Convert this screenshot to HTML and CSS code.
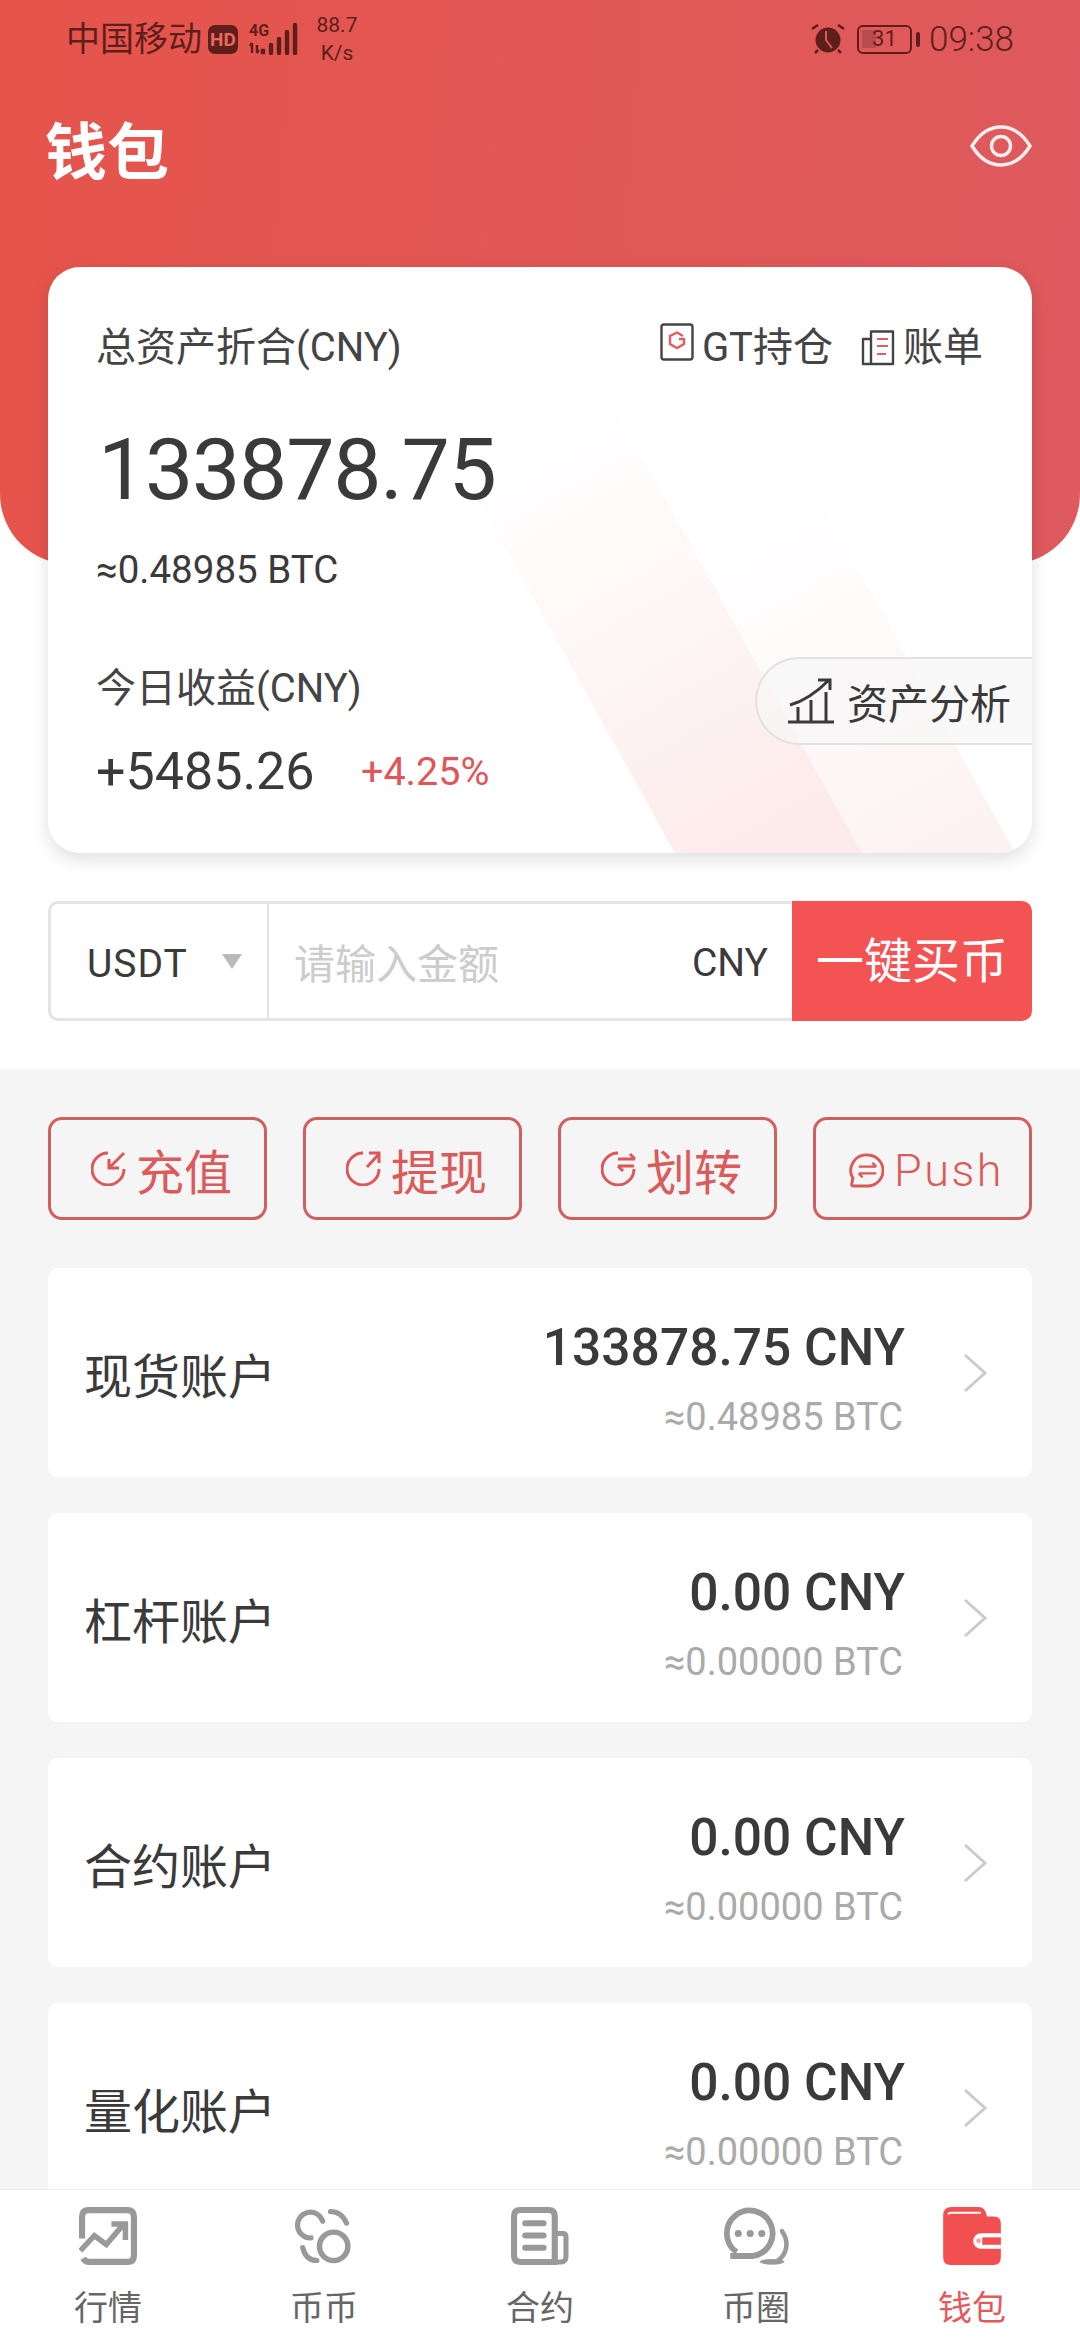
FILE: index.html
```html
<!DOCTYPE html>
<html>
<head>
<title>钱包</title>
<link rel="stylesheet" href="styles.css">
</head>
<body>
<div class="screen">
  <div class="main">
    <div class="head">
      <div class="status">
        <div class="status-left">
          <span class="carrier">中国移动</span>
          <span class="hd">HD</span>
          <svg class="signal" width="50" height="36" viewBox="0 -4 50 36">
            <text x="0" y="13" class="net">4G</text>
            <path d="M3 20v10M1 23l2-3M8 22v8M8 30l2-3M13 27h2v3h-2z" stroke="#5e1f1b" stroke-width="2.4" fill="none"/>
            <path d="M22 22v8M30 16v14M38 9v21M46 2v28" stroke="#5e1f1b" stroke-width="4.4" stroke-linecap="round"/>
          </svg>
          <span class="speed">88.7<br>K/s</span>
        </div>
        <div class="status-right">
          <svg width="34" height="30" viewBox="0 0 34 30">
            <circle cx="17" cy="16" r="12.5" fill="#5e1f1b"/>
            <path d="M1 5l6-4M33 5l-6-4M7 26l-3 3M27 26l3 3" stroke="#5e1f1b" stroke-width="2.6" fill="none"/>
            <path d="M15 7v9l6 8" stroke="#dc5a58" stroke-width="2" fill="none"/>
          </svg>
          <div class="battery"><span class="battery-fill"></span><span class="battery-num">31</span></div>
          <span class="battery-cap"></span>
          <span class="clock">09:38</span>
        </div>
      </div>
      <div class="title-row">
        <h1 class="title">钱包</h1>
        <svg class="eye" width="62" height="44" viewBox="0 0 62 44" fill="none" stroke="#fbeeee">
          <path d="M2 22C10 9 19 3 31 3s21 6 29 19C52 35 43 41 31 41S10 35 2 22Z" stroke-width="3.4"/>
          <circle cx="31" cy="22" r="9.5" stroke-width="3.4"/>
        </svg>
      </div>
    </div>

    <div class="card">
      <svg class="card-stripes" width="984" height="586" viewBox="0 0 984 586">
        <defs>
          <linearGradient id="stripeA" gradientUnits="userSpaceOnUse" x1="720" y1="586" x2="460" y2="120">
            <stop offset="0" stop-color="#fdeaea"/>
            <stop offset="0.55" stop-color="#fef8f8"/>
            <stop offset="0.85" stop-color="#fffefe"/>
            <stop offset="1" stop-color="#ffffff"/>
          </linearGradient>
          <linearGradient id="stripeB" gradientUnits="userSpaceOnUse" x1="890" y1="586" x2="680" y2="200">
            <stop offset="0" stop-color="#fdf2f2"/>
            <stop offset="0.7" stop-color="#fffdfd"/>
            <stop offset="1" stop-color="#ffffff"/>
          </linearGradient>
        </defs>
        <polygon points="814,586 967,586 754,200 601,200" fill="url(#stripeB)"/>
        <polygon points="627,586 814,586 555,120 368,120" fill="url(#stripeA)"/>
      </svg>

      <div class="card-top">
        <span>总资产折合(CNY)</span>
        <div class="card-links">
          <span class="card-link">
            <svg class="gt-icon" width="34" height="38" viewBox="0 0 34 38" fill="none">
              <rect x="1.5" y="1.5" width="31" height="35" rx="2.5" stroke="#444" stroke-width="2.4"/>
              <path d="M23 13l-6-3.5L10 13v8l7 4 7-4v-5h-5" stroke="#dd5f5f" stroke-width="2.4"/>
            </svg>
            GT持仓
          </span>
          <span class="card-link">
            <svg width="34" height="36" viewBox="0 0 34 36" fill="none">
              <path d="M10 9H2v25h30V1.500H10V34" stroke="#444" stroke-width="2.4" stroke-linejoin="round"/>
              <path d="M16 9h11M16 16h11M16 24h9" stroke="#dd5f5f" stroke-width="2.2"/>
            </svg>
            账单
          </span>
        </div>
      </div>
      <div class="total">133878.75</div>
      <div class="total-btc">≈0.48985 BTC</div>
      <div class="today-label">今日收益(CNY)</div>
      <div class="today-row">
        <span class="today-val">+5485.26</span>
        <span class="today-pct">+4.25%</span>
      </div>

      <div class="analysis">
        <svg width="48" height="46" viewBox="0 0 48 46" fill="none" stroke="#3a3a3a" stroke-width="3">
          <path d="M1 44h46M3 27C18 23 30 14 42 2M31 2h12v10M11 44V29M24 44V22M39 44V14"/>
        </svg>
        资产分析
      </div>
    </div>

    <div class="buy">
      <div class="buy-coin">USDT<span class="caret"></span></div>
      <div class="buy-input">
        <span class="placeholder">请输入金额</span>
        <span>CNY</span>
      </div>
      <div class="buy-btn">一键买币</div>
    </div>

    <div class="lower">
      <div class="actions">
        <div class="action">
          <svg class="action-icon" viewBox="0 0 35 35">
            <path d="M17 2A16 16 0 1 0 33 18M33 2 18 17M18 8v9h10"/>
          </svg>
          充值
        </div>
        <div class="action">
          <svg class="action-icon" viewBox="0 0 35 35">
            <path d="M17 2A16 16 0 1 0 33 18M21 16 33 3M23 2h10v10"/>
          </svg>
          提现
        </div>
        <div class="action">
          <svg class="action-icon" viewBox="0 0 35 35">
            <path d="M17 2A16 16 0 1 0 33 18M17 8h17M29 3l5 5M17 15h16M17 15l5 5"/>
          </svg>
          划转
        </div>
        <div class="action action-push">
          <svg class="action-icon" viewBox="0 0 36 36">
            <path d="M19 2a16 16 0 0 1 0 32H5q-3 0-2-3l1-5A16 16 0 0 1 19 2Z"/>
            <path d="M10 14h18M24 10l4 4M10 21h18M10 21l4 4" stroke-width="2.4"/>
          </svg>
          Push
        </div>
      </div>

      <div class="account">
        <span class="acc-name">现货账户</span>
        <div class="acc-nums">
          <div class="acc-cny">133878.75 CNY</div>
          <div class="acc-btc">≈0.48985 BTC</div>
        </div>
        <svg class="chev" width="26" height="40" viewBox="0 0 26 40"><path d="M3 2l20 18L3 38"/></svg>
      </div>
      <div class="account">
        <span class="acc-name">杠杆账户</span>
        <div class="acc-nums">
          <div class="acc-cny">0.00 CNY</div>
          <div class="acc-btc">≈0.00000 BTC</div>
        </div>
        <svg class="chev" width="26" height="40" viewBox="0 0 26 40"><path d="M3 2l20 18L3 38"/></svg>
      </div>
      <div class="account">
        <span class="acc-name">合约账户</span>
        <div class="acc-nums">
          <div class="acc-cny">0.00 CNY</div>
          <div class="acc-btc">≈0.00000 BTC</div>
        </div>
        <svg class="chev" width="26" height="40" viewBox="0 0 26 40"><path d="M3 2l20 18L3 38"/></svg>
      </div>
      <div class="account">
        <span class="acc-name">量化账户</span>
        <div class="acc-nums">
          <div class="acc-cny">0.00 CNY</div>
          <div class="acc-btc">≈0.00000 BTC</div>
        </div>
        <svg class="chev" width="26" height="40" viewBox="0 0 26 40"><path d="M3 2l20 18L3 38"/></svg>
      </div>
    </div>
  </div>

  <div class="tabs">
    <div class="tab">
      <svg class="tab-icon" viewBox="0 0 170 170" fill="none" stroke="#999">
        <path d="M9 92V28Q9 9 28 9H142Q161 9 161 28V142Q161 161 142 161H30Q18 161 12 150" stroke-width="18"/>
        <path d="M4 128 45 84 80 110 126 56" stroke-width="16"/>
        <path d="M95 50H136V97" stroke-width="16"/>
      </svg>
      行情
    </div>
    <div class="tab">
      <svg class="tab-icon" viewBox="0 0 180 172" fill="none" stroke="#999" stroke-width="16" stroke-linecap="round">
        <circle cx="120" cy="118" r="44" stroke-width="17"/>
        <path d="M86 40A40 40 0 1 0 50 92"/>
        <path d="M110 10C135 10 150 24 160 46"/>
        <path d="M24 122C30 148 45 162 68 162"/>
      </svg>
      币币
    </div>
    <div class="tab">
      <svg class="tab-icon" viewBox="0 0 57 57" fill="none" stroke="#999">
        <path d="M3 9Q3 3 9 3H37Q43 3 43 9V54H9Q3 54 3 48Z" stroke-width="6"/>
        <path d="M43 26H51Q54 26 54 29V49Q54 54 49 54H43" stroke-width="5"/>
        <path d="M14 16H32M14 28H32M14 40H32" stroke-width="6" stroke-linecap="round"/>
      </svg>
      合约
    </div>
    <div class="tab">
      <svg class="tab-icon tab-chat" viewBox="0 0 200 180" fill="none" stroke="#999">
        <path d="M40 140A71 71 0 1 1 90 152H20" stroke-width="18"/>
        <path d="M181 75C205 110 195 150 165 168" stroke-width="14" stroke-linecap="round"/>
        <ellipse cx="150" cy="170" rx="38" ry="9" fill="#999" stroke="none"/>
        <g fill="#999" stroke="none">
          <circle cx="45" cy="82" r="11"/>
          <circle cx="82" cy="82" r="11"/>
          <circle cx="118" cy="82" r="11"/>
        </g>
      </svg>
      币圈
    </div>
    <div class="tab tab-on">
      <svg class="tab-icon" viewBox="0 0 171 172">
        <path d="M0 25Q0 0 25 0H105Q125 0 130 28H150Q171 28 171 50V150Q171 172 150 172H22Q0 172 0 150Z" fill="#f25050"/>
        <path d="M16 22Q16 17 24 17H112" fill="none" stroke="#fff" stroke-width="6"/>
        <path d="M171 78H112A23 23 0 0 0 112 124H171Z" fill="#fff"/>
        <rect x="116" y="90" width="55" height="22" fill="#f25050"/>
        <circle cx="105" cy="100" r="7" fill="#f4a0a0"/>
      </svg>
      钱包
    </div>
  </div>
</div>
</body>
</html>
```

FILE: styles.css
```css
* {
    box-sizing: border-box;
}
body {
    margin: 0;
    background-color: #fff;
    font-family: Roboto, "Noto Sans CJK SC", sans-serif;
    color: #3a3a3a;
}
.screen {
    width: 1080px;
    height: 2340px;
    display: flex;
    flex-direction: column;
    overflow: hidden;
}
.main {
    flex: 1;
    min-height: 0;
    overflow: hidden;
}

/* red header */
.head {
    height: 564px;
    padding: 17px 48px 0 45px;
    background: linear-gradient(95deg, #e6544b, #de5a5e);
    border-radius: 0 0 70px 70px;
}
.status {
    display: flex;
    justify-content: space-between;
    align-items: flex-start;
    height: 60px;
    padding: 0 18px 0 21px;
    color: #5e1f1b;
}
.status-left,
.status-right {
    display: flex;
    align-items: center;
    height: 44px;
}
.status-left {
    gap: 6px;
}
.carrier {
    font-size: 34px;
    line-height: 44px;
}
.hd {
    width: 30px;
    height: 29px;
    border-radius: 7px;
    background-color: #5e1f1b;
    color: #e9675f;
    font-size: 19px;
    font-weight: 700;
    line-height: 29px;
    text-align: center;
}
.signal {
    margin: -4px 0 0 5px;
}
.net {
    font: 700 16px Roboto, sans-serif;
    fill: #5e1f1b;
}
.speed {
    margin-left: 9px;
    width: 46px;
    font-size: 21px;
    line-height: 28px;
    text-align: center;
}
.battery {
    position: relative;
    width: 55px;
    height: 29px;
    margin-left: 12px;
    border: 2.5px solid #5e1f1b;
    border-radius: 6px;
    overflow: hidden;
}
.battery-fill {
    position: absolute;
    left: 3px;
    top: 3px;
    width: 14px;
    height: 18px;
    background-color: #b84c4c;
}
.battery-num {
    position: relative;
    display: block;
    font-size: 22px;
    line-height: 24px;
    text-align: center;
}
.battery-cap {
    width: 4px;
    height: 15px;
    margin-left: 4px;
    border-radius: 2px;
    background-color: #5e1f1b;
}
.clock {
    margin-left: 9px;
    font-size: 35px;
    font-weight: 300;
}
.title-row {
    display: flex;
    justify-content: space-between;
    align-items: flex-start;
    height: 100px;
    margin-top: 27px;
}
.title {
    margin: 0;
    color: #fff;
    font-size: 62px;
    font-weight: 700;
    line-height: 100px;
}
.eye {
    margin-top: 20px;
}

/* asset card */
.card {
    position: relative;
    height: 586px;
    margin: -297px 48px 0;
    padding: 56px 48px 0;
    background-color: #fff;
    border-radius: 32px;
    box-shadow: 0 6px 18px rgba(0, 0, 0, 0.13);
    overflow: hidden;
}
.card-stripes {
    position: absolute;
    left: 0;
    top: 0;
}
.card-top,
.total,
.total-btc,
.today-label,
.today-row {
    position: relative;
}
.card-top {
    display: flex;
    justify-content: space-between;
    font-size: 40px;
    line-height: 50px;
    color: #444;
}
.card-links {
    display: flex;
    gap: 28px;
    margin-right: 1px;
}
.card-link {
    display: flex;
    align-items: center;
    gap: 8px;
}
.gt-icon {
    margin-top: -12px;
}
.total {
    margin-top: 47px;
    margin-left: 2px;
    font-size: 86px;
    line-height: 100px;
    letter-spacing: -1.3px;
}
.total-btc {
    margin-top: 25px;
    font-size: 38.5px;
    line-height: 50px;
}
.today-label {
    margin-top: 69px;
    font-size: 40px;
    line-height: 50px;
    color: #444;
}
.today-row {
    display: flex;
    align-items: center;
    margin-top: 28px;
    line-height: 60px;
}
.today-val {
    width: 265px;
    font-size: 52px;
}
.today-pct {
    color: #df5558;
    font-size: 39.5px;
}
.analysis {
    position: absolute;
    right: 0;
    top: 390px;
    display: flex;
    align-items: center;
    gap: 12px;
    width: 277px;
    height: 88px;
    padding-left: 30px;
    background-color: rgba(246, 246, 246, 0.7);
    border: 2px solid #e2e2e2;
    border-right: 0;
    border-radius: 44px 0 0 44px;
    font-size: 41px;
}

/* buy row */
.buy {
    display: flex;
    height: 120px;
    margin: 48px 48px 0;
    font-size: 39px;
}
.buy-coin {
    display: flex;
    align-items: center;
    width: 220px;
    padding: 6px 0 0 36px;
    border: 3px solid #e4e4e4;
    border-right-width: 1px;
    border-radius: 10px 0 0 10px;
    letter-spacing: 1px;
}
.caret {
    width: 0;
    height: 0;
    margin: -6px 0 0 34px;
    border-left: 10px solid transparent;
    border-right: 10px solid transparent;
    border-top: 15px solid #bbb;
}
.buy-input {
    flex: 1;
    display: flex;
    justify-content: space-between;
    align-items: center;
    padding: 4px 24px 0 25px;
    border-top: 3px solid #e4e4e4;
    border-bottom: 3px solid #e4e4e4;
    border-left: 1px solid #e4e4e4;
}
.placeholder {
    margin-top: -4px;
    color: #ccc;
    font-size: 41px;
}
.buy-btn {
    width: 240px;
    background-color: #f45353;
    border-radius: 0 10px 10px 0;
    color: #fff;
    font-size: 48px;
    line-height: 122px;
    text-align: center;
}

/* grey part */
.lower {
    height: 1200px;
    margin-top: 48px;
    padding: 48px 48px 0;
    background-color: #f5f5f5;
}
.actions {
    display: grid;
    grid-template-columns: repeat(4, 1fr);
    gap: 36px;
}
.action {
    display: flex;
    justify-content: center;
    align-items: center;
    gap: 10px;
    height: 103px;
    padding-left: 8px;
    border: 3px solid #d06060;
    border-radius: 14px;
    color: #da5b5b;
    font-size: 48px;
}
.action-push {
    padding-top: 4px;
    font-size: 45px;
    font-weight: 300;
    letter-spacing: 2.5px;
}
.action-icon {
    width: 35px;
    height: 35px;
    fill: none;
    stroke: #dc5757;
    stroke-width: 3;
}
.account {
    display: flex;
    align-items: center;
    height: 209px;
    margin-top: 36px;
    padding: 0 44px 0 36px;
    background-color: #fff;
    border-radius: 10px;
}
.actions + .account {
    margin-top: 48px;
}
.acc-name {
    flex: 1;
    font-size: 48px;
}
.acc-nums {
    margin-right: 57px;
    padding-top: 10px;
    text-align: right;
}
.acc-cny {
    font-size: 51.5px;
    font-weight: 500;
    line-height: 68px;
}
.acc-btc {
    margin-top: 10px;
    padding-right: 2px;
    color: #aaa;
    font-size: 38px;
    line-height: 50px;
}
.chev {
    fill: none;
    stroke: #ccc;
    stroke-width: 3;
}

/* bottom tabs */
.tabs {
    display: flex;
    height: 151px;
    padding-top: 17px;
    background-color: #fff;
    border-top: 1px solid #eee;
}
.tab {
    flex: 1;
    display: flex;
    flex-direction: column;
    align-items: center;
    color: #666;
    font-size: 34px;
    line-height: 40px;
}
.tab-icon {
    width: 58px;
    height: 58px;
    margin-bottom: 23px;
}
.tab-chat {
    width: 66px;
}
.tab-on {
    color: #e25a5a;
}
```
